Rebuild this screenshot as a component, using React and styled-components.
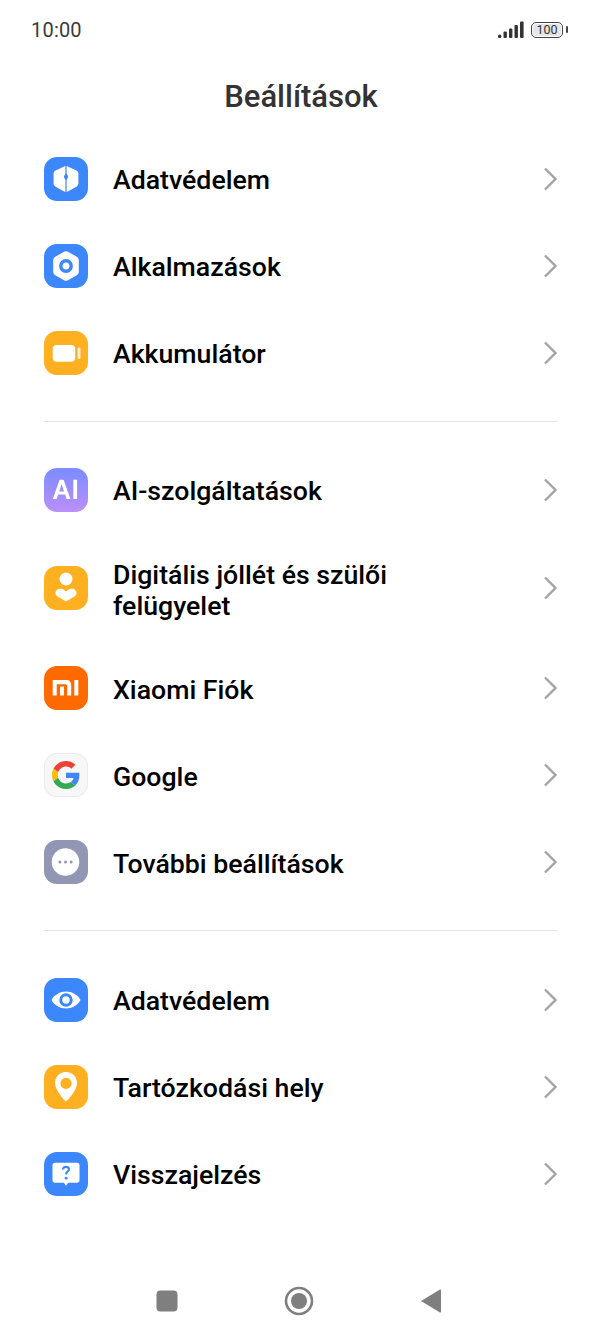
import React from 'react'
import styled, { createGlobalStyle } from 'styled-components'

const GlobalStyle = createGlobalStyle`
  html, body {
    margin: 0;
    padding: 0;
    background: #fff;
    font-family: Roboto, "Noto Sans", sans-serif;
  }
`

const Page = styled.div`
  width: 602px;
  height: 1338px;
  display: flex;
  flex-direction: column;
  overflow: hidden;
  background: #fff;
`

const StatusBar = styled.div`
  height: 60px;
  padding: 0 34px 0 31px;
  box-sizing: border-box;
  display: flex;
  align-items: center;
  justify-content: space-between;
  color: #3a3a3a;
`

const Clock = styled.span`
  font-size: 20px;
  letter-spacing: 0.2px;
`

const StatusIcons = styled.div`
  display: flex;
  align-items: center;
  gap: 7px;
`

const Title = styled.h1`
  margin: 0;
  height: 75px;
  padding-top: 18px;
  box-sizing: border-box;
  font-size: 31px;
  line-height: 38px;
  font-weight: 480;
  color: #333;
  text-align: center;
`

const Group = styled.div`
  display: flex;
  flex-direction: column;
`

const Divider = styled.div`
  height: 1px;
  margin: 24.5px 44px 24.9px;
  background: #e4e4e4;
`

const Row = styled.div`
  display: flex;
  align-items: center;
  box-sizing: border-box;
  min-height: ${p => (p.$tall ? 111.6 : 87)}px;
  padding: 0 44px ${p => (p.$tall ? 2 : 0)}px;
`

const Tile = styled.div`
  width: 44px;
  height: 44px;
  flex: none;
  border-radius: 13px;
  background: ${p => p.$bg};
  box-shadow: ${p => (p.$outlined ? 'inset 0 0 0 1px #ebebeb' : 'none')};
  display: flex;
  align-items: center;
  justify-content: center;
  margin-right: 25px;

  svg {
    display: block;
  }
`

const Label = styled.div`
  flex: 1;
  padding: ${p => (p.$tall ? '6px 100px 0 0' : '4px 100px 0 0')};
  font-size: 26.7px;
  line-height: 31px;
  font-weight: 480;
  color: #000;
`

const Chevron = styled.svg`
  flex: none;
`

const NavBar = styled.div`
  margin-top: auto;
  height: 75px;
  padding-right: 5px;
  box-sizing: border-box;
  display: flex;
  align-items: center;
  justify-content: center;
  gap: 106px;

  svg {
    display: block;
  }
`

const ShieldIcon = () => (
  <svg width="44" height="44" viewBox="0 0 44 44">
    <path
      d="M20.2 9.4 C21.3 8.9 22.7 8.9 23.8 9.4 L32.4 13.4 C33.6 14 34.4 15.2 34.4 16.5 L34.4 26.6 C34.4 27.9 33.6 29.1 32.4 29.7 L23.8 34.6 C22.7 35.1 21.3 35.1 20.2 34.6 L11.6 29.7 C10.4 29.1 9.6 27.9 9.6 26.6 L9.6 16.5 C9.6 15.2 10.4 14 11.6 13.4 Z"
      fill="#fff"
    />
    <path
      d="M21.4 8 H22.6 V16.6 L24.2 19.8 L22.6 23 V36 H21.4 V23 L19.8 19.8 L21.4 16.6 Z"
      fill="#3b87fb"
    />
  </svg>
)

const NutIcon = () => (
  <svg width="44" height="44" viewBox="0 0 44 44">
    <path
      d="M20 7.8 C21.2 7.1 22.8 7.1 24 7.8 L32.8 12.8 C34 13.5 34.8 14.8 34.8 16.2 L34.8 27.8 C34.8 29.2 34 30.5 32.8 31.2 L24 36.2 C22.8 36.9 21.2 36.9 20 36.2 L11.2 31.2 C10 30.5 9.2 29.2 9.2 27.8 L9.2 16.2 C9.2 14.8 10 13.5 11.2 12.8 Z"
      fill="#fff"
    />
    <circle cx="22" cy="22" r="5.2" fill="none" stroke="#3b87fb" strokeWidth="3.4" />
  </svg>
)

const BatteryTileIcon = () => (
  <svg width="44" height="44" viewBox="0 0 44 44">
    <rect x="8.7" y="14" width="22.5" height="16.7" rx="4" fill="#fff" />
    <rect x="33.6" y="16.4" width="2.8" height="11.6" rx="1" fill="#fff" opacity="0.85" />
  </svg>
)

const AiIcon = () => (
  <svg width="44" height="44" viewBox="0 0 44 44">
    <path
      fillRule="evenodd"
      d="M15.6 11.7 H19.6 L26.4 31 H22.6 L21.1 26.6 H14.1 L12.6 31 H8.8 Z M17.6 16 L15.2 23.4 H20 Z"
      fill="#fff"
    />
    <rect x="29.3" y="11.7" width="3.8" height="19.3" fill="#fff" />
  </svg>
)

const PersonIcon = () => (
  <svg width="44" height="44" viewBox="0 0 44 44">
    <circle cx="22" cy="13" r="6.5" fill="#fff" />
    <path
      d="M22 35.5 L13.5 30.5 C11 29 10.8 26 12.6 24.3 C14.6 22.3 18 22.5 20.2 24.2 L22 25.5 L23.8 24.2 C26 22.5 29.4 22.3 31.4 24.3 C33.2 26 33 29 30.5 30.5 Z"
      fill="#fff"
    />
  </svg>
)

const MiIcon = () => (
  <svg width="44" height="44" viewBox="0 0 44 44">
    <path
      d="M8.7 14 H22 C25.6 14 27.2 16 27.2 19.2 V29.5 H23.2 V20.2 C23.2 19 22.5 18.2 21.3 18.2 H12.7 V29.5 H8.7 Z"
      fill="#fff"
    />
    <rect x="16" y="20.6" width="3.9" height="8.9" fill="#fff" />
    <rect x="30.3" y="14" width="4" height="15.5" fill="#fff" />
  </svg>
)

const GoogleIcon = () => (
  <svg width="28" height="28" viewBox="0 0 48 48">
    <path fill="#EA4335" d="M24 9.5c3.54 0 6.71 1.22 9.21 3.6l6.85-6.85C35.9 2.38 30.47 0 24 0 14.62 0 6.51 5.38 2.56 13.22l7.98 6.19C12.43 13.72 17.74 9.5 24 9.5z" />
    <path fill="#4285F4" d="M46.98 24.55c0-1.57-.15-3.09-.38-4.55H24v9.02h12.94c-.58 2.96-2.26 5.48-4.78 7.18l7.73 6c4.51-4.18 7.09-10.36 7.09-17.65z" />
    <path fill="#FBBC05" d="M10.53 28.59c-.48-1.45-.76-2.99-.76-4.59s.27-3.14.76-4.59l-7.98-6.19C.92 16.46 0 20.12 0 24c0 3.88.92 7.54 2.56 10.78l7.97-6.19z" />
    <path fill="#34A853" d="M24 48c6.48 0 11.93-2.13 15.89-5.81l-7.73-6c-2.15 1.45-4.92 2.3-8.16 2.3-6.26 0-11.57-4.22-13.47-9.91l-7.98 6.19C6.51 42.62 14.62 48 24 48z" />
  </svg>
)

const MoreIcon = () => (
  <svg width="44" height="44" viewBox="0 0 44 44">
    <circle cx="21.5" cy="22" r="13.8" fill="#fff" />
    <circle cx="15.9" cy="22" r="1.5" fill="#9096b4" />
    <circle cx="21.5" cy="22" r="1.5" fill="#9096b4" />
    <circle cx="27.1" cy="22" r="1.5" fill="#9096b4" />
  </svg>
)

const EyeIcon = () => (
  <svg width="44" height="44" viewBox="0 0 44 44">
    <path d="M7.5 22 C10.5 16.5 16 13.5 22 13.5 C28 13.5 33.5 16.5 36.5 22 C33.5 27.5 28 30.5 22 30.5 C16 30.5 10.5 27.5 7.5 22 Z" fill="#fff" />
    <circle cx="22" cy="22" r="5.2" fill="none" stroke="#3b87fb" strokeWidth="3" />
  </svg>
)

const PinIcon = () => (
  <svg width="44" height="44" viewBox="0 0 44 44">
    <path
      d="M22 7 C29 7 33 12.5 33 18 C33 24.5 26.5 31.5 23.3 35.6 C22.6 36.5 21.4 36.5 20.7 35.6 C17.5 31.5 11 24.5 11 18 C11 12.5 15 7 22 7 Z"
      fill="#fff"
    />
    <circle cx="22" cy="18.4" r="5.6" fill="#ffb020" />
  </svg>
)

const FeedbackIcon = () => (
  <svg width="44" height="44" viewBox="0 0 44 44">
    <path
      d="M11 10.7 H33 C34.5 10.7 35.5 11.7 35.5 13.2 V28.2 C35.5 29.7 34.5 30.7 33 30.7 H24.2 L22 33.8 L19.8 30.7 H11 C9.5 30.7 8.5 29.7 8.5 28.2 V13.2 C8.5 11.7 9.5 10.7 11 10.7 Z"
      fill="#fff"
    />
    <path
      d="M19.1 17.4 C19.1 15.7 20.4 14.8 22 14.8 C23.6 14.8 24.9 15.8 24.9 17.3 C24.9 19.6 22.1 19.6 22.1 22.6"
      fill="none"
      stroke="#3b87fb"
      strokeWidth="2.2"
    />
    <circle cx="22.1" cy="26.2" r="1.4" fill="#3b87fb" />
  </svg>
)

const SignalIcon = () => (
  <svg width="26" height="18" viewBox="0 0 26 18">
    <rect x="0" y="13.5" width="3.4" height="3.5" rx="1.5" fill="#333" />
    <rect x="5.5" y="10.5" width="3.4" height="6.5" rx="1" fill="#333" />
    <rect x="11" y="7.5" width="3.4" height="9.5" rx="1" fill="#333" />
    <rect x="16.5" y="4" width="3.4" height="13" rx="1" fill="#333" />
    <rect x="22" y="0.5" width="3.6" height="16.5" rx="1" fill="#333" />
  </svg>
)

const BatteryBox = styled.div`
  position: relative;
  width: 32px;
  height: 16.5px;
  box-sizing: border-box;
  border: 1.5px solid #444;
  border-radius: 5px;
  background: #e6e6e6;
  box-shadow: inset 0 0 0 1px #fff;
  color: #333;
  font-size: 12.5px;
  line-height: 14px;
  text-align: center;
  margin-right: 5px;

  &::after {
    content: '';
    position: absolute;
    right: -5.5px;
    top: 3px;
    width: 2px;
    height: 7px;
    border-radius: 1px;
    background: #444;
  }
`

const groups = [
  [
    { label: 'Adatvédelem', bg: '#3b87fb', Icon: ShieldIcon },
    { label: 'Alkalmazások', bg: '#3b87fb', Icon: NutIcon },
    { label: 'Akkumulátor', bg: '#ffb020', Icon: BatteryTileIcon }
  ],
  [
    { label: 'AI-szolgáltatások', bg: 'linear-gradient(180deg, #7a8cff, #bb8ffb)', Icon: AiIcon },
    { label: 'Digitális jóllét és szülői felügyelet', bg: '#ffb020', Icon: PersonIcon, tall: true },
    { label: 'Xiaomi Fiók', bg: '#ff6a00', Icon: MiIcon },
    { label: 'Google', bg: '#f7f7f7', Icon: GoogleIcon, outlined: true },
    { label: 'További beállítások', bg: '#9096b4', Icon: MoreIcon }
  ],
  [
    { label: 'Adatvédelem', bg: '#3b87fb', Icon: EyeIcon },
    { label: 'Tartózkodási hely', bg: '#ffb020', Icon: PinIcon },
    { label: 'Visszajelzés', bg: '#3b87fb', Icon: FeedbackIcon }
  ]
]

export default function App() {
  return (
    <Page>
      <GlobalStyle />
      <StatusBar>
        <Clock>10:00</Clock>
        <StatusIcons>
          <SignalIcon />
          <BatteryBox>100</BatteryBox>
        </StatusIcons>
      </StatusBar>
      <Title>Beállítások</Title>
      {groups.map((rows, i) => (
        <React.Fragment key={i}>
          {i > 0 && <Divider />}
          <Group>
            {rows.map(({ label, bg, Icon, tall, outlined }) => (
              <Row key={label + bg} $tall={tall}>
                <Tile $bg={bg} $outlined={outlined}>
                  <Icon />
                </Tile>
                <Label $tall={tall}>{label}</Label>
                <Chevron width="16" height="26" viewBox="0 0 16 26">
                  <path d="M3 2.5 L13.5 13 L3 23.5" fill="none" stroke="#a3a3a3" strokeWidth="2.4" />
                </Chevron>
              </Row>
            ))}
          </Group>
        </React.Fragment>
      ))}
      <NavBar>
        <svg width="22" height="22" viewBox="0 0 22 22">
          <rect x="0.5" y="0.5" width="21" height="21" rx="4" fill="#7f7f7f" />
        </svg>
        <svg width="30" height="30" viewBox="0 0 30 30">
          <circle cx="15" cy="15" r="13" fill="none" stroke="#7f7f7f" strokeWidth="2.6" />
          <circle cx="15" cy="15" r="8" fill="#7f7f7f" />
        </svg>
        <svg width="22" height="26" viewBox="0 0 22 26">
          <path d="M1 13 L20 1.5 C20.6 1.2 21 1.6 21 2.2 V23.8 C21 24.4 20.6 24.8 20 24.5 Z" fill="#7f7f7f" />
        </svg>
      </NavBar>
    </Page>
  )
}
